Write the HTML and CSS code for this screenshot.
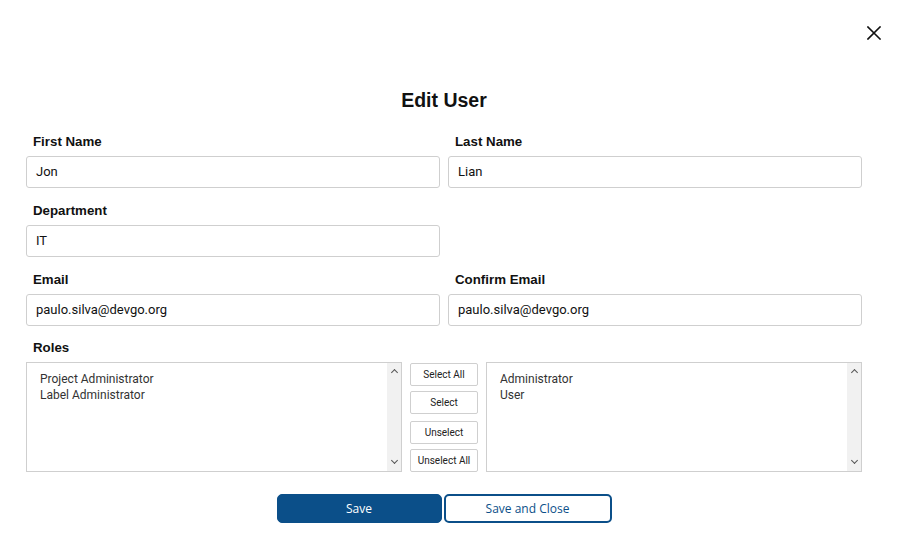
FILE: index.html
```html
<!DOCTYPE html>
<html lang="en">
<head>
<meta charset="utf-8">
<title>Edit User</title>
<link rel="stylesheet" href="styles.css">
</head>
<body>
<div class="modal">
  <div class="close-row">
    <button class="close" aria-label="Close">
      <svg width="14" height="14" viewBox="0 0 14 14"><path d="M1 1L13 13M13 1L1 13" stroke="#111" stroke-width="1.6" stroke-linecap="square"/></svg>
    </button>
  </div>
  <h1 class="title">Edit User</h1>
  <div class="form">
    <div class="field">
      <label class="label">First Name</label>
      <div class="input">Jon</div>
    </div>
    <div class="field">
      <label class="label">Last Name</label>
      <div class="input">Lian</div>
    </div>
    <div class="field">
      <label class="label">Department</label>
      <div class="input">IT</div>
    </div>
    <div class="field"></div>
    <div class="field">
      <label class="label">Email</label>
      <div class="input">paulo.silva@devgo.org</div>
    </div>
    <div class="field">
      <label class="label">Confirm Email</label>
      <div class="input">paulo.silva@devgo.org</div>
    </div>
  </div>
  <div class="roles">
    <label class="label">Roles</label>
    <div class="roles-row">
      <div class="list">
        <div class="items">
          <div>Project Administrator</div>
          <div>Label Administrator</div>
        </div>
        <div class="scroll"><span class="up"></span><span class="down"></span></div>
      </div>
      <div class="mid">
        <div class="pair">
          <button class="small">Select All</button>
          <button class="small">Select</button>
        </div>
        <div class="pair">
          <button class="small">Unselect</button>
          <button class="small">Unselect All</button>
        </div>
      </div>
      <div class="list">
        <div class="items">
          <div>Administrator</div>
          <div>User</div>
        </div>
        <div class="scroll"><span class="up"></span><span class="down"></span></div>
      </div>
    </div>
  </div>
  <div class="actions">
    <button class="btn primary">Save</button>
    <button class="btn outline">Save and Close</button>
  </div>
</div>
</body>
</html>
```

FILE: styles.css
```css
html, body {
  margin: 0;
  padding: 0;
  background: #fff;
}
body {
  font-family: Roboto, "Liberation Sans", sans-serif;
  color: #222;
}
.modal {
  width: 836px;
  padding: 0 35px 0 26px;
}
.close-row {
  height: 64px;
  display: flex;
  justify-content: flex-end;
  margin-right: -20px;
}
.close {
  margin-top: 25px;
  width: 16px;
  height: 16px;
  padding: 0;
  border: 0;
  background: none;
  display: flex;
  align-items: center;
  justify-content: center;
}
.title {
  margin: 25px 0 23px;
  text-align: center;
  font-family: "Liberation Sans", Arial, sans-serif;
  font-size: 19.5px;
  line-height: 22px;
  font-weight: 700;
  color: #111;
}
.form {
  display: grid;
  grid-template-columns: 1fr 1fr;
  column-gap: 8px;
  row-gap: 15px;
}
.field {
  display: flex;
  flex-direction: column;
}
.label {
  display: block;
  font-family: "Liberation Sans", Arial, sans-serif;
  font-size: 13.3px;
  line-height: 16px;
  font-weight: 700;
  padding-left: 7px;
  margin-bottom: 6px;
  color: #111;
}
.input {
  height: 32px;
  box-sizing: border-box;
  border: 1px solid #cfcfcf;
  border-radius: 3px;
  padding: 0 9px;
  font-size: 13px;
  line-height: 30px;
  color: #111;
}
.roles {
  margin-top: 14px;
}
.roles-row {
  display: flex;
  gap: 7px;
  height: 110px;
}
.list {
  flex: 1;
  display: flex;
  border: 1px solid #cfcfcf;
  box-sizing: border-box;
}
.items {
  flex: 1;
  padding: 8px 13px;
  font-size: 12px;
  line-height: 16px;
  color: #333;
}
.scroll {
  width: 14px;
  background: #f1f1f1;
  display: flex;
  flex-direction: column;
  justify-content: space-between;
  align-items: center;
  padding: 5px 0 6px;
}
.up, .down {
  width: 4px;
  height: 4px;
  border-left: 1.3px solid #555;
  border-top: 1.3px solid #555;
}
.up { transform: rotate(45deg); margin-top: 2px; }
.down { transform: rotate(225deg); margin-bottom: 2px; }
.mid {
  width: 68px;
  display: flex;
  flex-direction: column;
  justify-content: space-between;
  padding-top: 1px;
  margin-left: 1px;
  margin-right: 1px;
}
.pair {
  display: flex;
  flex-direction: column;
  gap: 5px;
}
.small {
  height: 23px;
  border: 1px solid #cfcfcf;
  border-radius: 2px;
  background: #fff;
  font-family: Roboto, "Liberation Sans", sans-serif;
  font-size: 10px;
  color: #222;
  padding: 0;
}
.actions {
  margin-top: 22px;
  display: flex;
  justify-content: center;
  gap: 2px;
}
.btn {
  height: 29px;
  border-radius: 5px;
  font-family: "Open Sans", "DejaVu Sans", sans-serif;
  font-size: 12px;
  padding: 0;
}
.primary {
  width: 165px;
  background: #0b4f89;
  border: 1px solid #0b4f89;
  color: #fff;
}
.outline {
  width: 168px;
  background: #fff;
  border: 2px solid #0b4f89;
  color: #0b4f89;
}
```
